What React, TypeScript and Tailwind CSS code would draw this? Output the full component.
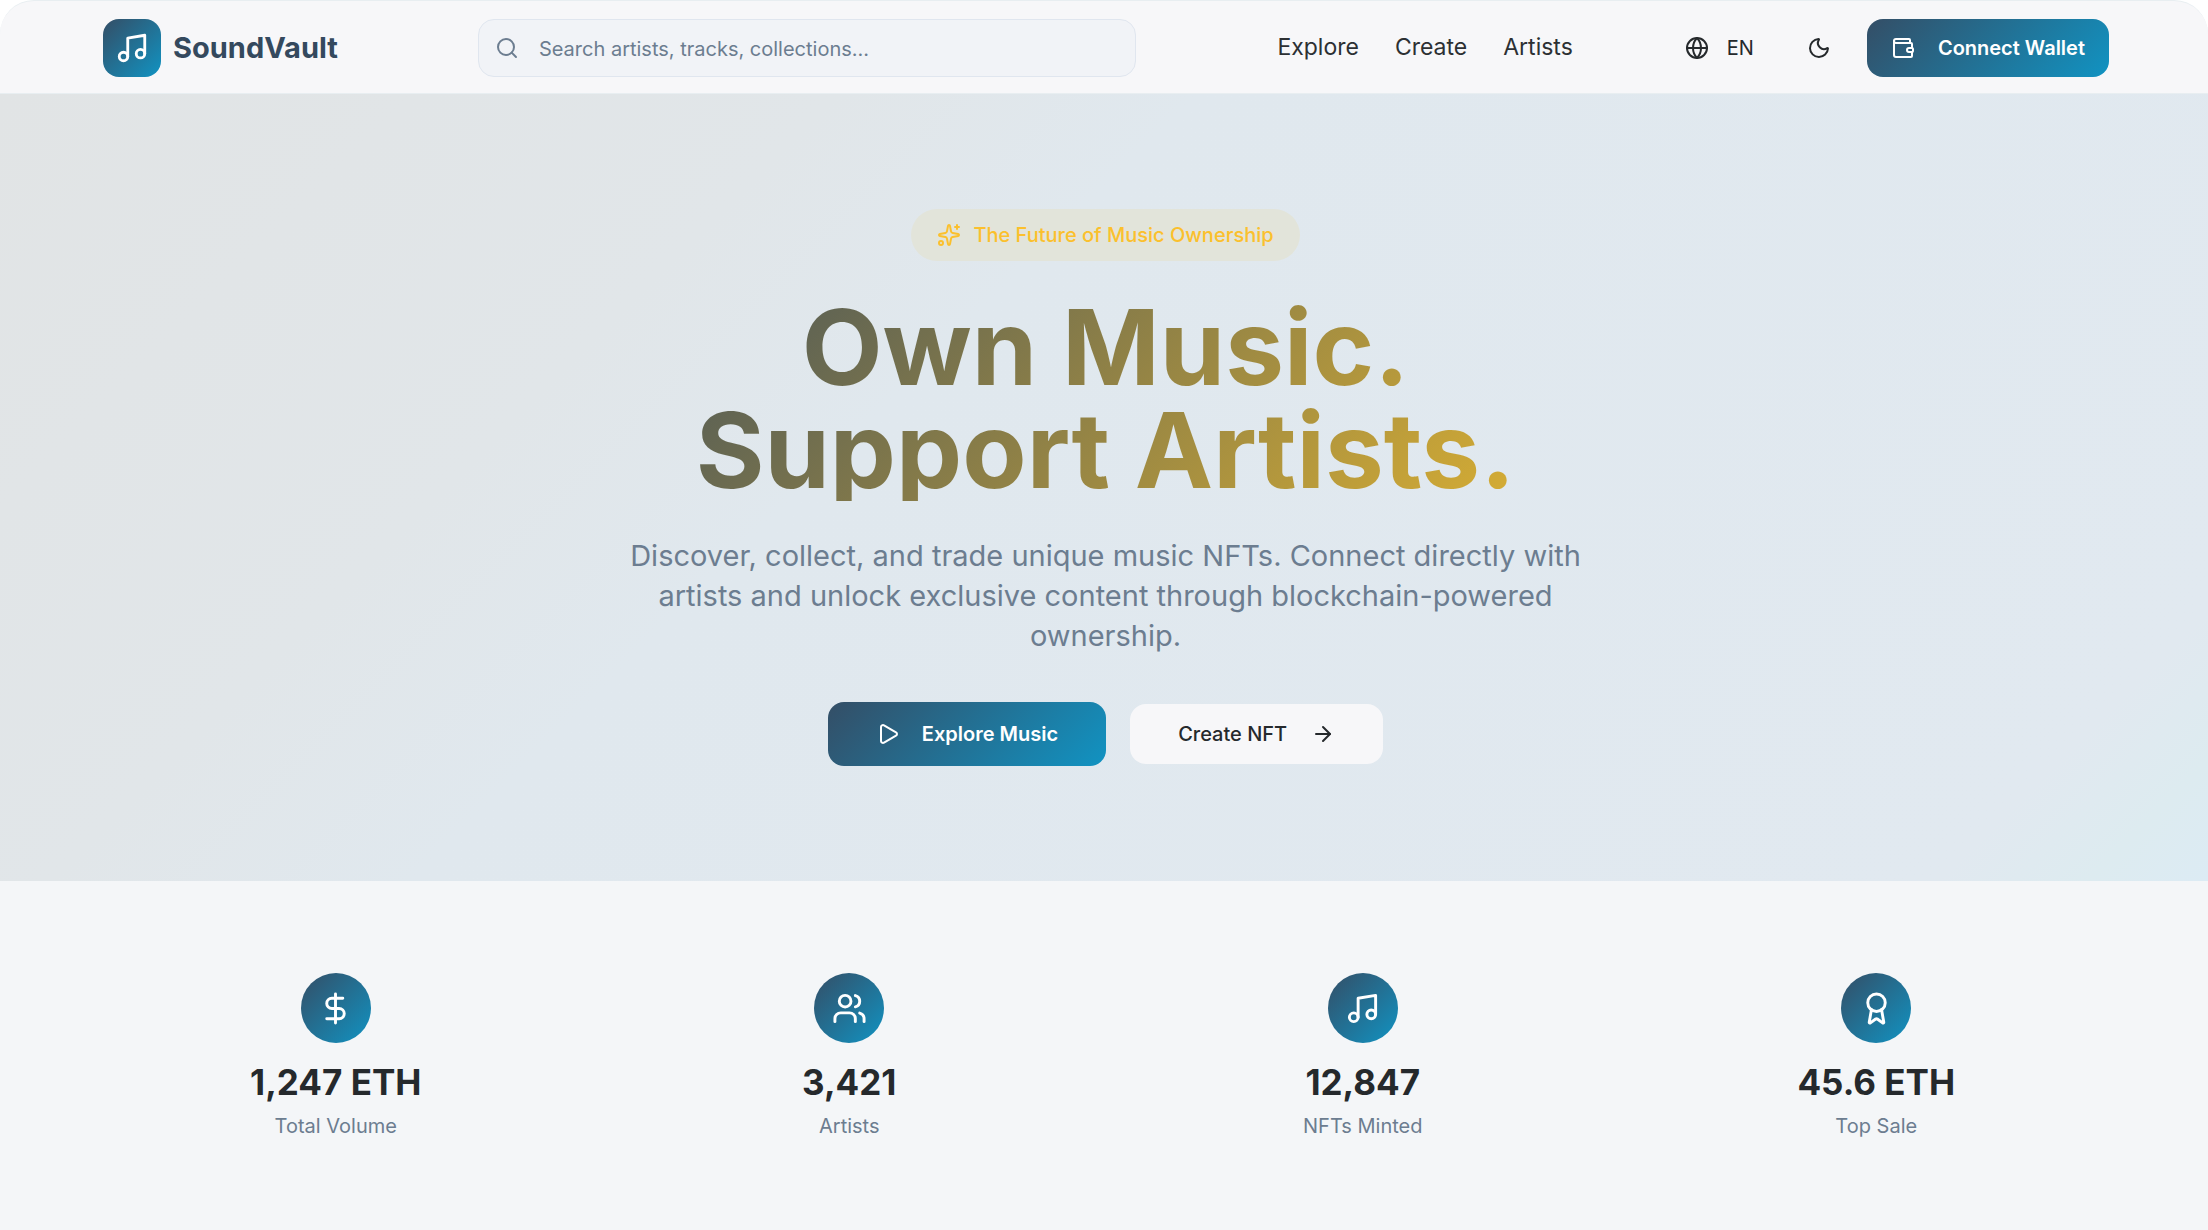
import React from "react";
import {
  ArrowRight,
  Award,
  DollarSign,
  Globe,
  Moon,
  Music,
  Play,
  Search,
  Sparkles,
  Users,
  Wallet,
  type LucideIcon,
} from "lucide-react";

const navLinks = ["Explore", "Create", "Artists"];

const stats: { icon: LucideIcon; value: string; label: string }[] = [
  { icon: DollarSign, value: "1,247 ETH", label: "Total Volume" },
  { icon: Users, value: "3,421", label: "Artists" },
  { icon: Music, value: "12,847", label: "NFTs Minted" },
  { icon: Award, value: "45.6 ETH", label: "Top Sale" },
];

function Header() {
  return (
    <header className="flex h-[94px] items-center rounded-t-[34px] border-y border-[#e8eef1] bg-[#f7f7f9] pt-px pr-[99px] pl-[103px]">
      <a href="#home" className="flex items-center gap-3">
        <span className="flex size-[58px] items-center justify-center rounded-2xl bg-linear-135/srgb from-[#344e66] to-[#1193c2]">
          <Music className="size-[34px] text-white" />
        </span>
        <span className="text-[29px] leading-10 font-bold text-[#34495e]">SoundVault</span>
      </a>

      <label className="ml-[140px] flex h-[58px] w-[658px] items-center gap-5 rounded-2xl border border-[#e0e6ef] bg-[#f1f3f7] pr-4 pl-4">
        <Search className="size-6 shrink-0 text-[#6c7d90]" />
        <input
          type="search"
          aria-label="Search"
          placeholder="Search artists, tracks, collections..."
          className="min-w-0 flex-1 bg-transparent pt-0.5 text-[20px] outline-none placeholder:text-[#6c7d90]"
        />
      </label>

      <nav className="ml-auto flex items-center gap-9 text-[23px] text-[#2c3033]">
        {navLinks.map((name) => (
          <a key={name} href={"#" + name.toLowerCase()}>
            {name}
          </a>
        ))}
      </nav>

      <div className="ml-[112px] flex items-center text-[#25292c]">
        <button type="button" className="flex items-center gap-[18px] text-[20px]">
          <Globe className="size-6" />
          EN
        </button>
        <button type="button" aria-label="Toggle dark mode" className="ml-[53px]">
          <Moon className="size-6" />
        </button>
        <button
          type="button"
          className="ml-9 flex h-[58px] items-center gap-[23px] rounded-2xl bg-linear-135/srgb from-[#344e66] to-[#1193c2] px-6 text-[20px] font-semibold text-white"
        >
          <Wallet className="size-6" />
          Connect Wallet
        </button>
      </div>
    </header>
  );
}

function Hero() {
  return (
    <section className="flex flex-col items-center bg-[linear-gradient(135deg,#e1e4e5_0%,#e1e6e9_28%,#e0e8ee_40%,#e1e9f0_91%,#ddebf0_96%,#dcebf4_100%)] py-[115px] pl-[3px] text-center">
      <p className="flex h-[52px] items-center gap-3 rounded-full bg-[#e2e4da] px-[26px] text-[20px] font-medium text-[#fbc02d]">
        <Sparkles className="size-6" />
        The Future of Music Ownership
      </p>
      <h1 className="mt-[34px] w-full max-w-[1300px] bg-linear-135/srgb from-[#304660] to-[#f5c02b] bg-clip-text text-[105px] leading-[103px] font-bold text-transparent">
        Own Music.
        <br />
        Support Artists.
      </h1>
      <p className="mt-[35px] max-w-[986px] text-[29px] leading-10 text-[#6c7d90]">
        Discover, collect, and trade unique music NFTs. Connect directly with artists and unlock
        exclusive content through blockchain-powered ownership.
      </p>
      <div className="mt-[46px] flex items-center gap-6 text-[20px]">
        <button
          type="button"
          className="flex h-16 items-center gap-[22px] rounded-2xl bg-linear-135/srgb from-[#344e66] to-[#1193c2] px-12 font-semibold text-white"
        >
          <Play className="size-6" />
          Explore Music
        </button>
        <button
          type="button"
          className="flex h-[60px] items-center gap-6 rounded-2xl bg-[#f7f7f9] px-12 font-medium text-[#25292c]"
        >
          Create NFT
          <ArrowRight className="size-6" />
        </button>
      </div>
    </section>
  );
}

function Stats() {
  return (
    <section className="grid grow grid-cols-4 gap-12 bg-[#f4f6f8] pt-[92px] pr-[99px] pb-24 pl-[103px]">
      {stats.map(({ icon: Icon, value, label }) => (
        <div key={label} className="flex flex-col items-center">
          <span className="flex size-[70px] items-center justify-center rounded-full bg-linear-135/srgb from-[#344e66] to-[#1193c2]">
            <Icon className="size-[35px] text-white" />
          </span>
          <p className="mt-4 text-[35px] leading-[46px] font-bold text-[#25292c]">{value}</p>
          <p className="mt-1.5 text-[20px] leading-[30px] text-[#6c7d90]">{label}</p>
        </div>
      ))}
    </section>
  );
}

export default function App() {
  return (
    <div className="flex min-h-screen flex-col bg-white font-['Inter',sans-serif]">
      <Header />
      <main className="flex grow flex-col">
        <Hero />
        <Stats />
      </main>
    </div>
  );
}
